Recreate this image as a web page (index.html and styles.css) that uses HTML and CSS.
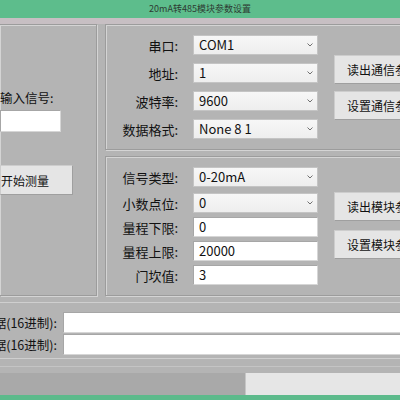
FILE: index.html
```html
<!DOCTYPE html>
<html>
<head>
<meta charset="utf-8">
<link rel="stylesheet" href="styles.css">
</head>
<body>
<div class="win">
  <div class="title">20mA转485模块参数设置</div>
  <div class="sep"></div>
  <div class="top">
    <div class="group left">
      <div class="sig-label">输入信号:</div>
      <div class="field sig-input"></div>
      <div class="btn start">开始测量</div>
    </div>
    <div class="rightcol">
      <div class="group comm">
        <div class="form">
          <div class="row"><span class="lbl">串口:</span><div class="select">COM1<svg class="arr" width="6" height="4" viewBox="0 0 6 4"><path d="M0.5 0.5 L3 3 L5.5 0.5" fill="none" stroke="#707070" stroke-width="1"/></svg></div></div>
          <div class="row"><span class="lbl">地址:</span><div class="select">1<svg class="arr" width="6" height="4" viewBox="0 0 6 4"><path d="M0.5 0.5 L3 3 L5.5 0.5" fill="none" stroke="#707070" stroke-width="1"/></svg></div></div>
          <div class="row"><span class="lbl">波特率:</span><div class="select">9600<svg class="arr" width="6" height="4" viewBox="0 0 6 4"><path d="M0.5 0.5 L3 3 L5.5 0.5" fill="none" stroke="#707070" stroke-width="1"/></svg></div></div>
          <div class="row"><span class="lbl">数据格式:</span><div class="select">None 8 1<svg class="arr" width="6" height="4" viewBox="0 0 6 4"><path d="M0.5 0.5 L3 3 L5.5 0.5" fill="none" stroke="#707070" stroke-width="1"/></svg></div></div>
        </div>
        <div class="btns comm-btns">
          <div class="btn side">读出通信参数</div>
          <div class="btn side">设置通信参数</div>
        </div>
      </div>
      <div class="group module">
        <div class="form mform">
          <div class="row first"><span class="lbl">信号类型:</span><div class="select">0-20mA<svg class="arr" width="6" height="4" viewBox="0 0 6 4"><path d="M0.5 0.5 L3 3 L5.5 0.5" fill="none" stroke="#707070" stroke-width="1"/></svg></div></div>
          <div class="row"><span class="lbl">小数点位:</span><div class="select">0<svg class="arr" width="6" height="4" viewBox="0 0 6 4"><path d="M0.5 0.5 L3 3 L5.5 0.5" fill="none" stroke="#707070" stroke-width="1"/></svg></div></div>
          <div class="row"><span class="lbl">量程下限:</span><div class="field box">0</div></div>
          <div class="row"><span class="lbl">量程上限:</span><div class="field box">20000</div></div>
          <div class="row"><span class="lbl">门坎值:</span><div class="field box">3</div></div>
        </div>
        <div class="btns mod-btns">
          <div class="btn side">读出模块参数</div>
          <div class="btn side">设置模块参数</div>
        </div>
      </div>
    </div>
  </div>
  <div class="data">
    <div class="drow"><div class="dlbl"><span>据(16进制):</span></div><div class="field wide"></div></div>
    <div class="drow"><div class="dlbl"><span>据(16进制):</span></div><div class="field wide"></div></div>
  </div>
  <div class="line"></div>
  <div class="status"><div class="s1"></div><div class="s2"></div></div>
  <div class="bottom"></div>
</div>
</body>
</html>
```

FILE: styles.css
```css
* { box-sizing: border-box; }
html, body { margin: 0; padding: 0; }
body {
  width: 400px;
  height: 400px;
  overflow: hidden;
  background: #b4b4b4;
  font-family: "Noto Sans CJK SC", "Noto Sans", sans-serif;
  font-size: 13px;
  color: #111;
}
.win { width: 400px; height: 400px; display: flex; flex-direction: column; overflow: hidden; }
.title {
  height: 18px;
  background: #5dbd8c;
  color: #2d3a32;
  font-size: 9px;
  line-height: 18px;
  text-align: center;
  flex: none;
}
.sep { height: 6px; background: #c7bfc3; flex: none; }
.top { display: flex; gap: 8px; height: 272px; flex: none; }
.group {
  border: 1px solid #9c9c9c;
  box-shadow: inset 1px 1px 0 #d4d4d4, 1px 1px 0 #d4d4d4;
}
.left {
  flex: none;
  width: 97px;
  border-left: none;
  display: block;
  padding-top: 64px;
}
.sig-label {
  line-height: 18px;
  white-space: nowrap;
  font-size: 12.5px;
}
.sig-input {
  width: 61px;
  height: 22px;
  margin-top: 3px;
  border-left: none;
}
.start {
  width: 73px;
  height: 30px;
  margin-top: 33px;
  padding-left: 0;
  border-left: none;
  font-size: 12px;
}
.rightcol { flex: none; width: 295px; display: flex; flex-direction: column; gap: 6px; }
.comm { height: 126px; display: flex; border-right: none; overflow: hidden; }
.module { height: 140px; display: flex; border-right: none; overflow: hidden; }
.form { display: flex; flex-direction: column; gap: 8px; padding-top: 10px; flex: none; }
.mform { gap: 4px; padding-top: 10px; }
.mform .first { margin-bottom: 2px; }
.row { display: flex; align-items: center; height: 20px; }
.lbl { width: 72px; text-align: right; margin-right: 15px; white-space: nowrap; }
.select {
  width: 125px;
  height: 20px;
  border: 1px solid #c4c4c4;
  background: linear-gradient(#f7f7f7, #eeeeee);
  padding-left: 5px;
  display: flex;
  align-items: center;
  justify-content: space-between;
  padding-right: 4px;
  line-height: 18px;
}
.arr { flex: none; }
.field {
  background: #fff;
  border: 1px solid #a6a6a6;
  border-right-color: #d6d6d6;
  border-bottom-color: #d6d6d6;
}
.box { width: 125px; height: 20px; padding-left: 5px; line-height: 18px; }
.btns { display: flex; flex-direction: column; margin-left: 16px; flex: none; }
.comm-btns { padding-top: 30px; gap: 7px; }
.mod-btns { padding-top: 35px; gap: 9px; }
.btn {
  display: flex;
  align-items: center;
  background: #e5e5e5;
  border: 1px solid #cdcdcd;
  border-bottom-color: #9f9f9f;
  border-right-color: #9f9f9f;
  white-space: nowrap;
}
.side { width: 92px; height: 29px; padding-left: 12px; font-size: 12px; }
.data {
  margin-top: 6px;
  height: 57px;
  border-top: 1px solid #cfcfcf;
  border-bottom: 1px solid #cfcfcf;
  padding-top: 9px;
  display: flex;
  flex-direction: column;
  gap: 1px;
  flex: none;
}
.drow { display: flex; align-items: center; height: 21px; flex: none; }
.dlbl {
  width: 63px;
  flex: none;
  display: flex;
  justify-content: flex-end;
  padding-right: 6px;
  white-space: nowrap;
  font-size: 12.5px;
}
.wide { flex: 1; height: 21px; border-right: none; }
.line { margin-top: 7px; height: 1px; background: #c4c4c4; flex: none; }
.status {
  margin-top: 6px;
  height: 22px;
  display: flex;
  flex: none;
}
.s1 { width: 246px; background: #a9a9a9; border-right: 1px solid #c6c6c6; }
.s2 { flex: 1; background: #e6e6e6; }
.bottom { flex: 1; background: #5cba8b; }
```
